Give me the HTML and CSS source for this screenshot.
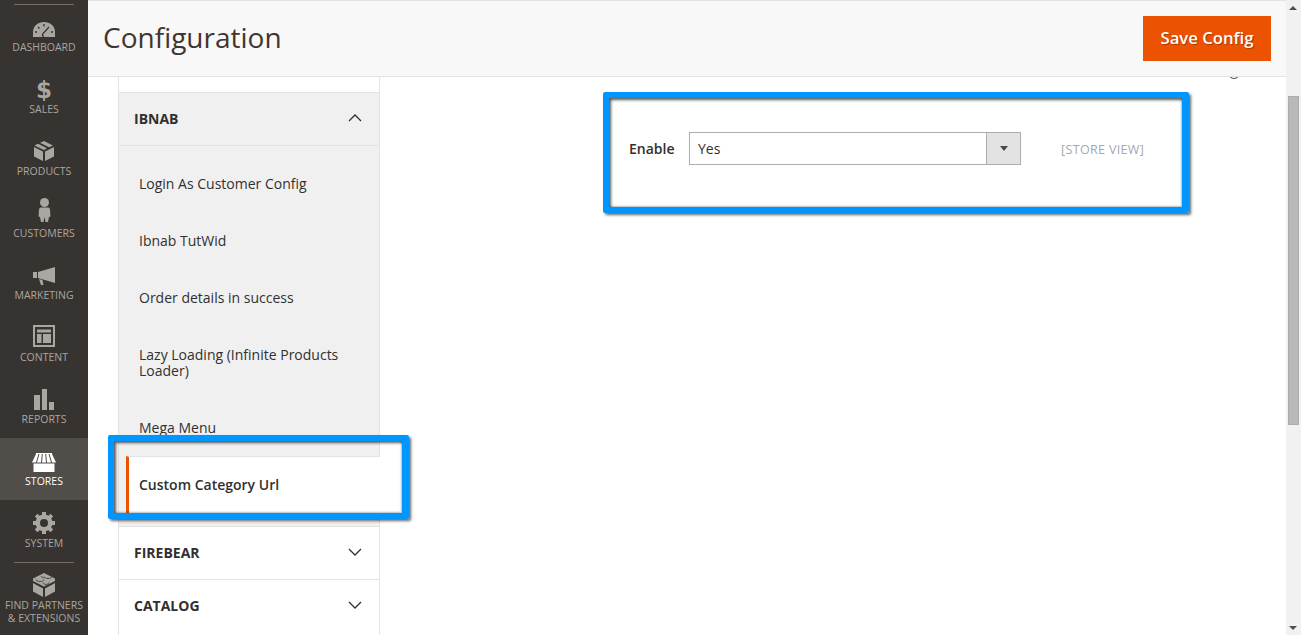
FILE: index.html
```html
<!DOCTYPE html>
<html lang="en">
<head>
<meta charset="utf-8">
<title>Configuration</title>
<link rel="stylesheet" href="styles.css">
</head>
<body>
<div class="app">
  <nav class="menu">
    <div class="menu-rule"></div>
    <a class="menu-item"><svg class="ico" viewBox="0 0 28 28"><path d="M3 25v-5C3 14 8 10 14 10s11 4 11 10v5z"/><path class="cut" d="M14 24.500c-1.500 0-2-1.500-1.200-2.600L19 15M5 20h2M21 20h2M8 15l1.500 1.500M14 12v2.500"/></svg><span>Dashboard</span></a>
    <a class="menu-item"><span class="ico ico-glyph">$</span><span>Sales</span></a>
    <a class="menu-item"><svg class="ico" viewBox="0 0 28 28"><path d="M4 11l9 4.500V25l-9-4.500zM24 11v9.500L15 25v-9.500zM4.500 9.500L8 7.800l9 4.500-3 1.700zM10 6.800L14 5l9 4.500-4 1.800z"/></svg><span>Products</span></a>
    <a class="menu-item"><svg class="ico" viewBox="0 0 28 28"><circle cx="14.500" cy="4.500" r="4.500"/><path d="M11 9.500h7c1 0 1.500.5 2 2l.5 7-1.500.5-1 5h-2.500l-1-5-1 5H11l-1-5-1.500-.5.5-7c.5-1.500 1-2 2-2z"/></svg><span>Customers</span></a>
    <a class="menu-item"><svg class="ico" viewBox="0 0 28 28"><path d="M3 12h4v6H3zM8 12l17-5v16L8 18zM9 19l3.500 1 1 5H11z"/></svg><span>Marketing</span></a>
    <a class="menu-item"><svg class="ico" viewBox="0 0 28 28"><path fill-rule="evenodd" d="M3 3h22v22H3zM5 5v18h18V5zM7 7.500h14v3H7zM7 12h4.500v9H7zM13 12h8v9h-8z"/></svg><span>Content</span></a>
    <a class="menu-item"><svg class="ico" viewBox="0 0 28 28"><path d="M4 11h6v15H4zM12 5h5v21h-5zM19 18h5v8h-5z"/></svg><span>Reports</span></a>
    <a class="menu-item menu-active"><svg class="ico" viewBox="0 0 28 28"><path d="M6 7h16v1H6zM6 8h2.400L6 16.500H2zM9.400 8h2.400L11 16.500H7zM12.800 8h2.400l.8 8.500h-4zM16.200 8h2.400l2.400 8.500h-4zM19.600 8H22l4 8.500h-4zM3.500 17.500h21V26h-21z"/></svg><span>Stores</span></a>
    <a class="menu-item"><svg class="ico" viewBox="0 0 28 28"><circle cx="14" cy="15" r="8.500"/><path class="teeth" d="M14 4v22M3 15h22M6.200 7.200l15.600 15.600M21.800 7.200L6.200 22.800"/><circle class="hole" cx="14" cy="15" r="4"/></svg><span>System</span></a>
    <div class="menu-rule menu-rule-low"></div>
    <a class="menu-item menu-partners"><svg class="ico" viewBox="0 0 28 28"><path d="M14 3l11 5.500V11l-11 5.500L3 11V8.500zM3 13l10 5.500V27L3 21.500zM25 13v8.500L15 27v-8.500z"/><path class="cut-thin" d="M6 9.500c0 1 2 2 4 2s4-1 4-2M14 6.500c0 1 2 2 4 2s4-1 4-2M11 6c0 1 2 1.800 3 1.800M13 12.500c0 1 2 2 3 2s3-1 3-2"/></svg><span>Find Partners<br>&amp; Extensions</span></a>
  </nav>
  <div class="main">
    <header class="page-head">
      <h1>Configuration</h1>
      <button class="save">Save Config</button>
    </header>
    <div class="body">
      <aside class="tabs">
        <div class="tabs-gap"></div>
        <div class="tab-head tab-open"><span>Ibnab</span><svg class="chev" viewBox="0 0 14 8"><path d="M1 7l6-6 6 6"/></svg></div>
        <ul class="sub">
          <li>Login As Customer Config</li>
          <li>Ibnab TutWid</li>
          <li>Order details in success</li>
          <li>Lazy Loading (Infinite Products Loader)</li>
          <li>Mega Menu</li>
          <li class="sub-active">Custom Category Url</li>
        </ul>
        <div class="tab-head"><span>Firebear</span><svg class="chev" viewBox="0 0 14 8"><path d="M1 1l6 6 6-6"/></svg></div>
        <div class="tab-head"><span>Catalog</span><svg class="chev" viewBox="0 0 14 8"><path d="M1 1l6 6 6-6"/></svg></div>
      </aside>
      <section class="form">
        <div class="help-arc"></div>
        <div class="field">
          <label>Enable</label>
          <div class="select"><span>Yes</span><i class="select-btn"><b></b></i></div>
          <span class="scope">[Store View]</span>
        </div>
      </section>
      <div class="mark mark-form"></div>
      <div class="mark mark-tab"></div>
    </div>
  </div>
  <div class="scrollbar">
    <div class="arrow"></div>
    <div class="thumb"></div>
    <div class="arrow arrow-down"></div>
  </div>
</div>
</body>
</html>
```
FILE: styles.css
```css
* { box-sizing: border-box; }
html, body { margin: 0; height: 100%; overflow: hidden; }
body { font-family: "Open Sans", sans-serif; color: #303030; background: #fff; }
.app { display: flex; height: 635px; }

.menu { width: 88px; flex: none; background: #373330; display: flex; flex-direction: column; padding-top: 4px; overflow: hidden; }
.menu-rule { height: 1px; background: #736e69; margin: 0 14px -1px; flex: none; position: relative; z-index: 1; }
.menu-item { height: 62px; flex: none; display: flex; flex-direction: column; align-items: center; padding-top: 8px; color: #aaa6a0; font-size: 10.5px; line-height: 13px; text-transform: uppercase; text-align: center; white-space: nowrap; }
.ico { width: 28px; height: 28px; margin-bottom: 1px; fill: #aaa6a0; flex: none; }
.ico-glyph { display: flex; align-items: center; justify-content: center; padding-top: 5px; font: 700 23px/23px "DejaVu Sans", sans-serif; color: #aaa6a0; }
.cut { fill: none; stroke: #373330; stroke-width: 1.300; }
.cut-thin { fill: none; stroke: #373330; stroke-width: .8; }
.teeth { fill: none; stroke: #aaa6a0; stroke-width: 4; }
.hole { fill: #373330; }
.menu-active { background: #514d49; color: #fff; }
.menu-active .ico { fill: #fff; }
.menu-partners { height: 73px; }

.main { flex: 1; min-width: 0; display: flex; flex-direction: column; }
.page-head { height: 77px; flex: none; background: #f8f8f8; border-top: 1px solid #e3e3e3; border-bottom: 1px solid #e3e3e3; display: flex; align-items: center; justify-content: space-between; padding: 0 15px; position: relative; z-index: 2; }
h1 { margin: -4px 0 0; font-size: 28px; font-weight: 400; color: #41362f; line-height: 36px; }
.save { border: 0; width: 128px; height: 45px; background: #eb5202; color: #fff; font: 600 16.700px "Open Sans", sans-serif; text-shadow: 1px 1px 1px rgba(0,0,0,.3); padding: 0 0 2px; }

.body { flex: 1; min-height: 0; display: flex; position: relative; overflow: hidden; padding-left: 30px; }
.tabs { width: 262px; flex: none; border-left: 1px solid #e3e3e3; border-right: 1px solid #e3e3e3; }
.tabs-gap { height: 15px; }
.tab-head { height: 53px; border-top: 1px solid #e3e3e3; display: flex; align-items: center; justify-content: space-between; padding: 0 17px 2px 15px; font-size: 14px; font-weight: 700; text-transform: uppercase; color: #303030; }
.tab-open { background: #f0f0f0; }
.chev { width: 14px; height: 8px; fill: none; stroke: #303030; stroke-width: 1.300; }
.sub { margin: 0; padding: 9px 0 13px; list-style: none; background: #f0f0f0; border-top: 1px solid #e3e3e3; }
.sub li { padding: 20.500px 20px; font-size: 14px; line-height: 16px; color: #303030; }
.sub .sub-active { background: #fff; font-weight: 600; margin: 0 -1px 0 7px; padding: 20px 20px 20px 10px; border-left: 3px solid #eb5202; border-top: 1px solid #e3e3e3; }

.form { flex: 1; position: relative; padding: 55px 0 0 249px; }
.help-arc { position: absolute; left: 848px; top: -11px; width: 12px; height: 13px; border: 1px solid #514943; border-radius: 50%; }
.field { display: flex; align-items: center; height: 33px; }
.field label { font-size: 14px; font-weight: 600; width: 60px; flex: none; }
.select { width: 332px; height: 33px; border: 1px solid #adadad; display: flex; align-items: center; justify-content: space-between; padding-left: 8px; font-size: 14px; color: #303030; }
.select-btn { width: 34px; height: 31px; background: #e3e3e3; border-left: 1px solid #adadad; display: flex; align-items: center; justify-content: center; }
.select-btn b { width: 0; height: 0; border: 4px solid transparent; border-top: 5px solid #514943; border-bottom: 0; }
.scope { margin: 2px 0 0 40px; font-size: 12.500px; letter-spacing: .35px; color: #a0a9b2; text-transform: uppercase; }

.mark { position: absolute; border: 6px solid #0096ff; border-right-width: 7px; border-radius: 2px; box-shadow: inset 2px 2px 3px rgba(0,0,0,.65), inset -1px -1px 2px rgba(0,0,0,.25), 2px 2px 3px rgba(0,0,0,.6); pointer-events: none; }
.mark-form { left: 515px; top: 15px; width: 586px; height: 121px; }
.mark-tab { left: 20px; top: 358px; width: 301px; height: 84px; }

.scrollbar { width: 15px; flex: none; background: #f1f1f1; position: relative; padding: 96px 2px 0; }
.arrow { position: absolute; left: 3px; top: 6px; width: 0; height: 0; border: 4px solid transparent; border-bottom: 4px solid #505050; border-top: 0; }
.arrow-down { top: auto; bottom: 5px; border-bottom: 0; border-top: 4px solid #505050; }
.thumb { height: 329px; background: #b9b9b9; border: 1px solid #acacac; }
```
